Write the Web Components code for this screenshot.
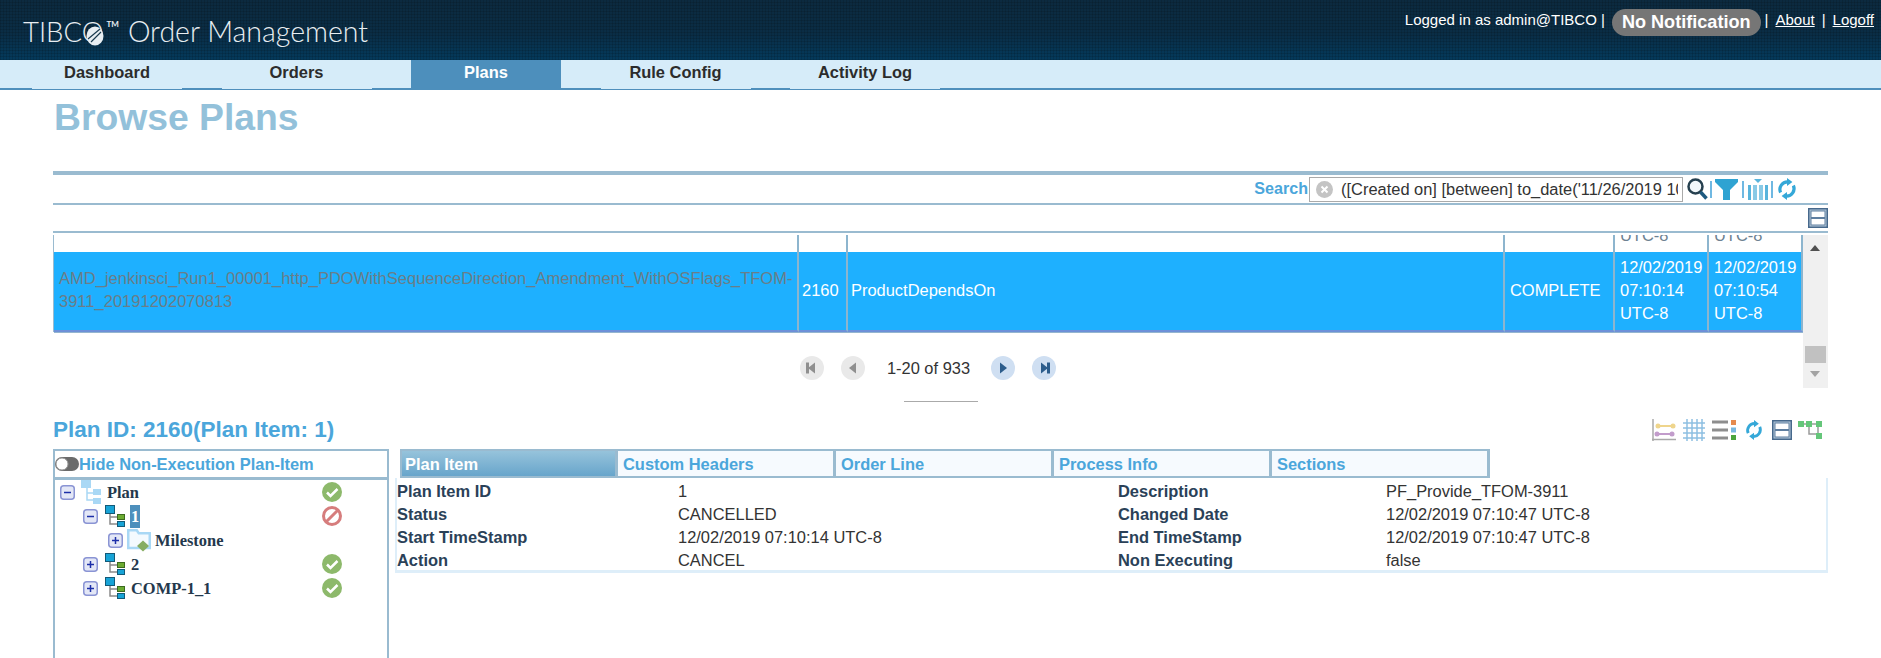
<!DOCTYPE html>
<html>
<head>
<meta charset="utf-8">
<title>Browse Plans</title>
<style>
  html, body { margin: 0; height: 100%; overflow: hidden; background: #fff; }
  body { font: 16.45px "Liberation Sans", Arial, sans-serif; color: #333; }
</style>
</head>
<body>
<oms-header></oms-header>
<oms-nav></oms-nav>
<oms-browse></oms-browse>

<script>
const RULE = '#9abbd0';
const LINK = '#4ba6db';

// shared icons, all hand drawn against the reference
const icons = {
  refresh: (w, h) => `<svg width="${w}" height="${h}" viewBox="0 0 20 22" fill="none">
    <path d="M3.6 14.5A7.6 7.6 0 0 1 11 3.8" stroke="#35a8d8" stroke-width="3.2"/>
    <path d="M16.4 7.5A7.6 7.6 0 0 1 9 18.2" stroke="#35a8d8" stroke-width="3.2"/>
    <path d="M10 0v8l5.4-4zM10 14v8l-5.4-4z" fill="#35a8d8"/></svg>`,
  box: () => `<svg width="20" height="20" viewBox="0 0 20 20" style="display:block">
    <rect width="20" height="20" fill="#47698c"/>
    <rect x="1.500" y="1.500" width="17" height="17" fill="#b4c8d9"/>
    <rect x="2.500" y="2.500" width="15" height="15" fill="#5f7fa0"/>
    <rect x="3.500" y="3.500" width="13" height="5.500" fill="#fff"/>
    <rect x="3.500" y="11" width="13" height="5.500" fill="#fff"/></svg>`,
  plan: `<svg width="20" height="24" viewBox="0 0 20 24" fill="none">
    <path d="M6 8v12h6M6 13h6" stroke="#a9d8f5" stroke-width="1.5"/>
    <rect width="10" height="8" fill="#a9d8f5"/>
    <rect x="12" y="9" width="8" height="6" fill="#a9d8f5"/>
    <rect x="12" y="18" width="8" height="6" fill="#a9d8f5"/></svg>`,
  node: `<svg width="20" height="22" viewBox="0 0 20 22" fill="none">
    <path d="M5 8v11h7M5 12h7" stroke="#8a8a8a" stroke-width="1.5"/>
    <rect x=".5" y=".5" width="9" height="8" fill="#17a3d6" stroke="#135a78"/>
    <rect x="12.5" y="9.5" width="7" height="5" fill="#6cab32" stroke="#3c6b1f"/>
    <rect x="12.5" y="16.5" width="7" height="5" fill="#17a3d6" stroke="#135a78"/></svg>`,
  folder: `<svg width="24" height="23" viewBox="0 0 24 23" fill="none">
    <path d="M1.250 19V1.250h8.500l2 3h11V19z" fill="#f4fafe" stroke="#a9d8f5" stroke-width="2.500"/>
    <path d="M16 11.500l6 5.500-6 5.500-6-5.500z" fill="#86ad63"/></svg>`
};

class OmsHeader extends HTMLElement {
  constructor() {
    super();
    this.shadow = this.attachShadow({ mode: 'open' });
  }

  connectedCallback() {
    this.render();
  }

  render() {
    this.shadow.innerHTML = `
      <style>
        :host {
          display: flex;
          justify-content: space-between;
          height: 60px;
          color: #fff;
          background:
            repeating-linear-gradient(90deg, rgba(0,0,0,.12) 0 1px, transparent 1px 3px),
            repeating-linear-gradient(0deg, rgba(0,0,0,.12) 0 1px, transparent 1px 3px),
            linear-gradient(#0c2a3f, #0a2d45 55%, #043a5c);
        }
        .logo {
          display: flex;
          align-items: baseline;
          padding: 14px 0 0 23px;
          color: #e8eef2;
          font: 300 28.500px Lato, "Liberation Sans", sans-serif;
        }
        .tibco { position: relative; font-size: 27.500px; }
        .leaf { position: absolute; right: 0; top: 11px; }
        sup { font-size: 8px; margin: 0 9px 0 3px; align-self: flex-start; line-height: 20px; font-weight: 700; }
        .user {
          display: flex;
          align-items: flex-start;
          padding: 9px 7px 0 0;
          font-size: 15px;
          line-height: 22px;
        }
        .pill {
          margin: 0 4px 0 7px;
          padding: 0 10px;
          height: 27px;
          line-height: 27px;
          border-radius: 14px;
          background: #767676;
          font-size: 18.100px;
          font-weight: bold;
        }
        a { color: #fff; text-decoration: underline; margin: 0 7px; }
        a:last-child { margin-right: 0; }
      </style>
      <div class="logo">
        <span class="tibco">TIBCO<svg class="leaf" width="18" height="20" viewBox="0 0 18 20"><ellipse cx="9" cy="10" rx="8.500" ry="9.500" fill="#e8eef2"/><path d="M2 13 14 3M5 16 15 6" stroke="#1a3a4e" stroke-width="1.200"/></svg></span>
        <sup>TM</sup>
        <span>Order Management</span>
      </div>
      <div class="user">
        <span>Logged in as admin@TIBCO |</span>
        <span class="pill">No Notification</span>
        <span>|</span><a>About</a><span>|</span><a>Logoff</a>
      </div>
    `;
  }
}

class OmsNav extends HTMLElement {
  constructor() {
    super();
    this.shadow = this.attachShadow({ mode: 'open' });
  }

  connectedCallback() {
    this.render();
  }

  render() {
    const tabs = ['Dashboard', 'Orders', 'Plans', 'Rule Config', 'Activity Log'];
    this.shadow.innerHTML = `
      <style>
        :host {
          display: flex;
          gap: 39.500px;
          height: 30px;
          padding-left: 32px;
          background: linear-gradient(#d6ecf9 28px, #4f8fbc 28px);
        }
        div {
          width: 150px;
          height: 29px;
          line-height: 24px;
          text-align: center;
          font-weight: bold;
          color: #2c2c2c;
          background: #d6ecf9;
        }
        .on { height: 30px; color: #fff; background: #4d8fbc; }
      </style>
      ${ tabs.map(t => `<div class="${ t === 'Plans' ? 'on' : '' }">${ t }</div>`).join('') }
    `;
  }
}

class OmsSearch extends HTMLElement {
  constructor() {
    super();
    this.shadow = this.attachShadow({ mode: 'open' });
  }

  connectedCallback() {
    this.render();
  }

  render() {
    this.shadow.innerHTML = `
      <style>
        :host {
          display: flex;
          align-items: center;
          justify-content: flex-end;
          height: 28px;
          padding-right: 31px;
        }
        b { color: ${ LINK }; margin: -2px 1px 0 0; font-size: 16.100px; }
        .input {
          display: flex;
          align-items: center;
          box-sizing: border-box;
          width: 374px;
          height: 25px;
          margin: 1px 1px 0 0;
          border: 1px solid #aaa;
          overflow: hidden;
          white-space: nowrap;
        }
        .clear { flex: none; margin: 0 8px 0 6px; }
        .value { flex: 1; min-width: 0; overflow: hidden; margin-right: 4px; }
        .sep { width: 2px; height: 17px; background: ${ LINK }; opacity: .8; margin: 0 3px; }
        svg { flex: none; display: block; }
      </style>
      <b>Search</b>
      <div class="input">
        <svg class="clear" width="17" height="17" viewBox="0 0 17 17"><circle cx="8.500" cy="8.500" r="8.500" fill="#c4c4c4"/><path d="M5.500 5.500l6 6M11.500 5.500l-6 6" stroke="#fff" stroke-width="2"/></svg>
        <span class="value">([Created on] [between] to_date('11/26/2019 10:00:00','MM/DD/YYYY HH24:MI:SS')</span>
      </div>
      <svg style="margin-left:3px" width="21" height="22" viewBox="0 0 21 22" fill="none">
        <circle cx="8.500" cy="8.500" r="7" stroke="#26404f" stroke-width="2.500" fill="#f3f8fb"/>
        <path d="M13.500 14l6 6.500" stroke="#1d5a80" stroke-width="3.500"/></svg>
      <span class="sep" style="margin-left:2px"></span>
      <svg width="23" height="21" viewBox="0 0 23 21"><path d="M0 0h23v3l-8 8v10h-7V11L0 3z" fill="#2fa3d2"/></svg>
      <span class="sep" style="margin-left:4px;margin-right:4px"></span>
      <svg width="20" height="21" viewBox="0 0 20 21" fill="#58b4dc"><path d="M6 0h8l-4 4z"/><rect y="6" width="3" height="15"/><rect x="5" y="6" width="4" height="15" opacity=".7"/><rect x="11" y="6" width="4" height="15" opacity=".7"/><rect x="17" y="6" width="3" height="15"/></svg>
      <span class="sep" style="margin-left:3px;margin-right:4px"></span>
      ${ icons.refresh(20, 22) }
    `;
  }
}

class PlanTable extends HTMLElement {
  constructor() {
    super();
    this.shadow = this.attachShadow({ mode: 'open' });
  }

  connectedCallback() {
    this.render();
  }

  render() {
    this.shadow.innerHTML = `
      <style>
        :host {
          display: grid;
          grid-template-columns: 1fr 25px;
          height: 153px;
          margin-top: 2px;
        }
        .rows {
          display: grid;
          grid-template-columns: 745px 49px 657px 110px 94px 94px;
          grid-template-rows: 17px 80px;
          margin-left: 1px;
          box-shadow: -1px 0 0 ${ RULE };
          height: 97px;
        }
        .cell {
          box-sizing: border-box;
          border-right: 2px solid #8db5ce;
          padding-left: 5px;
          overflow: hidden;
        }
        .prev {
          display: flex;
          align-items: flex-end;
          padding-bottom: 5px;
          line-height: 23px;
          color: #6d8191;
        }
        .sel {
          display: flex;
          align-items: center;
          background: #1eb0ff;
          color: #fff;
          line-height: 23px;
          padding-bottom: 2px;
          border-bottom: 2px solid #6e90d8;
          box-shadow: 0 1px 0 #94b5d0;
        }
        .name { color: #6a7d88; font-size: 16.530px; }
        .tight { padding-left: 3px; }
        .bar {
          position: relative;
          background: #f0f0f0;
        }
        .thumb { position: absolute; left: 2px; right: 2px; top: 111px; height: 17px; background: #c1c1c1; }
        .up, .down {
          position: absolute;
          left: 7px;
          border: 5.500px solid transparent;
          border-top: 0;
          border-bottom: 6px solid #505050;
          top: 10px;
        }
        .down {
          top: 136px;
          border-bottom: 0;
          border-top: 6px solid #a3a3a3;
        }
      </style>
      <div>
        <div class="rows">
          <div class="cell prev"></div>
          <div class="cell prev"></div>
          <div class="cell prev"></div>
          <div class="cell prev"></div>
          <div class="cell prev">UTC-8</div>
          <div class="cell prev">UTC-8</div>
          <div class="cell sel name"><span>AMD_jenkinsci_Run1_00001_http_PDOWithSequenceDirection_Amendment_WithOSFlags_TFOM-3911_20191202070813</span></div>
          <div class="cell sel tight">2160</div>
          <div class="cell sel tight">ProductDependsOn</div>
          <div class="cell sel">COMPLETE</div>
          <div class="cell sel">12/02/2019 07:10:14 UTC-8</div>
          <div class="cell sel">12/02/2019 07:10:54 UTC-8</div>
        </div>
        <plan-pager></plan-pager>
      </div>
      <div class="bar"><i class="up"></i><i class="thumb"></i><i class="down"></i></div>
    `;
  }
}

class PlanPager extends HTMLElement {
  constructor() {
    super();
    this.shadow = this.attachShadow({ mode: 'open' });
  }

  connectedCallback() {
    this.render();
  }

  button(dir, bar, on) {
    const fill = on ? '#2c5d8c' : '#8f8f8f';
    const tri = dir === 'left' ? '15,6.500 15,17.500 8,12' : '9,6.500 9,17.500 16,12';
    const edge = !bar ? '' : dir === 'left'
      ? `<rect x="6" y="6.500" width="3" height="11" fill="${ fill }"/>`
      : `<rect x="15" y="6.500" width="3" height="11" fill="${ fill }"/>`;
    return `<svg width="24" height="24" viewBox="0 0 24 24"><circle cx="12" cy="12" r="12" fill="${ on ? '#cfdff2' : '#e9e9e9' }"/><polygon points="${ tri }" fill="${ fill }"/>${ edge }</svg>`;
  }

  render() {
    this.shadow.innerHTML = `
      <style>
        :host {
          display: flex;
          align-items: center;
          justify-content: center;
          height: 24px;
          margin-top: 24px;
          color: #333;
        }
        span { margin: 0 21px 0 22px; white-space: nowrap; }
        svg { display: block; flex: none; }
        svg + svg { margin-left: 17px; }
      </style>
      ${ this.button('left', true, false) }
      ${ this.button('left', false, false) }
      <span>1-20 of 933</span>
      ${ this.button('right', false, true) }
      ${ this.button('right', true, true) }
    `;
  }
}

class PlanToolbar extends HTMLElement {
  constructor() {
    super();
    this.shadow = this.attachShadow({ mode: 'open' });
  }

  connectedCallback() {
    this.render();
  }

  render() {
    this.shadow.innerHTML = `
      <style>
        :host {
          display: flex;
          justify-content: space-between;
          align-items: center;
          height: 26px;
          margin-top: 15px;
          padding: 0 6px 0 0;
        }
        h2 { margin: 0; font-size: 22.500px; color: ${ LINK }; line-height: 26px; }
        .tools { display: flex; align-items: center; }
        svg { display: block; flex: none; }
      </style>
      <h2>Plan ID: 2160(Plan Item: 1)</h2>
      <div class="tools">
        <svg width="24" height="22" viewBox="0 0 24 22" fill="none" style="margin-right:7px">
          <path d="M1 0v22M0 20.500h24" stroke="#aaa" stroke-width="1.500"/>
          <path d="M6 7h15" stroke="#efd58c" stroke-width="2"/><circle cx="6" cy="7" r="2.500" fill="#efd58c"/><circle cx="21" cy="7" r="2.500" fill="#efd58c"/>
          <path d="M5 15h15" stroke="#c29ccb" stroke-width="2"/><circle cx="5" cy="15" r="2.500" fill="#c29ccb"/><circle cx="20" cy="15" r="2.500" fill="#c29ccb"/>
        </svg>
        <svg width="22" height="22" viewBox="0 0 22 22" stroke="#8ec0e2" stroke-width="1.500" style="margin-right:7px">
          <path d="M4 0v22M9 0v22M14 0v22M19 0v22M0 4h22M0 9h22M0 14h22M0 19h22"/>
        </svg>
        <svg width="24" height="20" viewBox="0 0 24 20" style="margin-right:9px">
          <path d="M0 2h16M0 10h16M0 18h16" stroke="#8e8e8e" stroke-width="3"/>
          <rect x="19" width="5" height="5" fill="#e58a4e"/><rect x="19" y="7.500" width="5" height="5" fill="#79b7de"/><rect x="19" y="15" width="5" height="5" fill="#4ba43c"/>
        </svg>
        <span style="margin-right:9px">${ icons.refresh(18, 22) }</span>
        <span style="margin-right:6px">${ icons.box() }</span>
        <svg width="24" height="20" viewBox="0 0 24 20" fill="#65c67a">
          <path d="M5 4h16M11 4v10h8M20 4v12" stroke="#9a9a9a" stroke-width="1.500" fill="none"/>
          <rect y="1" width="6" height="6"/><rect x="8" y="1" width="6" height="6"/><rect x="18" y="1" width="6" height="6"/><rect x="18" y="13" width="6" height="6"/>
        </svg>
      </div>
    `;
  }
}

class TreeRow extends HTMLElement {
  static get observedAttributes() {
    return ['label'];
  }

  constructor() {
    super();
    this.shadow = this.attachShadow({ mode: 'open' });
  }

  get label() {
    return this.getAttribute('label');
  }

  connectedCallback() {
    this.render();
  }

  attributeChangedCallback() {
    if (this.isConnected) this.render();
  }

  status() {
    const state = this.getAttribute('status');
    if (state === 'ok') {
      return `<svg class="st" width="20" height="20" viewBox="0 0 20 20" fill="none"><circle cx="10" cy="10" r="10" fill="#8db96b"/><path d="M5 10.500l3.500 3.500L15.500 7" stroke="#fff" stroke-width="2.500"/></svg>`;
    }
    if (state === 'cancel') {
      return `<svg class="st" width="20" height="20" viewBox="0 0 20 20" fill="none"><circle cx="10" cy="10" r="8.500" fill="#fff" stroke="#d67d7d" stroke-width="3"/><path d="M4.500 15.500l11-11" stroke="#d67d7d" stroke-width="3"/></svg>`;
    }
    return '';
  }

  render() {
    const open = this.getAttribute('open') !== null;
    const plus = open ? '' : '<path d="M7.500 4v7" stroke="#1c2fa8" stroke-width="1.500"/>';
    const selected = this.getAttribute('selected') !== null;
    this.shadow.innerHTML = `
      <style>
        :host {
          display: flex;
          align-items: center;
          height: 24px;
          padding-left: var(--indent, 5px);
          padding-right: 45px;
          font: bold 16.450px "Liberation Serif", "Times New Roman", serif;
          color: #24384c;
        }
        svg { display: block; flex: none; }
        .icon { flex: none; margin: 0 var(--after, 5px) 0 var(--before, 5px); display: block; }
        .label { padding: 0 1px; line-height: 23px; }
        .label.on { background: #4d8fbc; color: #fff; }
        .st { margin-left: auto; }
      </style>
      <svg width="15" height="15" viewBox="0 0 15 15" fill="none">
        <rect x=".75" y=".75" width="13.500" height="13.500" rx="3" fill="#e3e7f6" stroke="#8a94d4" stroke-width="1.500"/>
        <path d="M4 7.500h7" stroke="#1c2fa8" stroke-width="1.500"/>${ plus }
      </svg>
      <span class="icon">${ icons[this.getAttribute('icon')] }</span>
      <span class="label ${ selected ? 'on' : '' }">${ this.label }</span>
      ${ this.status() }
    `;
  }
}

class PlanTree extends HTMLElement {
  constructor() {
    super();
    this.shadow = this.attachShadow({ mode: 'open' });
  }

  connectedCallback() {
    this.render();
  }

  render() {
    this.shadow.innerHTML = `
      <style>
        :host {
          display: block;
          box-sizing: border-box;
          flex: none;
          width: 336px;
          border: solid ${ RULE };
          border-width: 2px 2px 0;
        }
        .toggle {
          display: flex;
          align-items: center;
          height: 26px;
          padding-left: 0;
          border-bottom: 3px solid ${ RULE };
          font-weight: bold;
          color: ${ LINK };
          white-space: nowrap;
        }
        svg { display: block; flex: none; }
        .rows { height: 200px; }
      </style>
      <div class="toggle">
        <svg width="24" height="14" viewBox="0 0 24 14"><rect width="24" height="14" rx="7" fill="#6b6b6b"/><circle cx="7" cy="7" r="6" fill="#fff" stroke="#999"/></svg>
        <span>Hide Non-Execution Plan-Item</span>
      </div>
      <div class="rows">
        <tree-row label="Plan" icon="plan" status="ok" open style="--indent:5px;--before:6px"></tree-row>
        <tree-row label="1" icon="node" status="cancel" open selected style="--indent:28px;--before:7px"></tree-row>
        <tree-row label="Milestone" icon="folder" style="--indent:53px;--before:4px;--after:3px"></tree-row>
        <tree-row label="2" icon="node" status="ok" style="--indent:28px;--before:7px"></tree-row>
        <tree-row label="COMP-1_1" icon="node" status="ok" style="--indent:28px;--before:7px"></tree-row>
      </div>
    `;
  }
}

class PlanTabs extends HTMLElement {
  constructor() {
    super();
    this.shadow = this.attachShadow({ mode: 'open' });
  }

  connectedCallback() {
    this.render();
  }

  render() {
    const tabs = ['Plan Item', 'Custom Headers', 'Order Line', 'Process Info', 'Sections'];
    this.shadow.innerHTML = `
      <style>
        :host { display: flex; padding-left: 5px; }
        div {
          box-sizing: border-box;
          width: 218px;
          height: 29px;
          padding-left: 5px;
          line-height: 26px;
          font-weight: bold;
          white-space: nowrap;
          color: ${ LINK };
          background: #f6fafe;
          border: solid ${ RULE };
          border-width: 2px 3px 2px 0;
        }
        div:first-of-type {
          padding-left: 3px;
          border-left-width: 2px;
          color: #fff;
          background: linear-gradient(#96c3db, #68a5cb);
        }
      </style>
      ${ tabs.map(t => `<div>${ t }</div>`).join('') }
    `;
  }
}

class PlanDetails extends HTMLElement {
  constructor() {
    super();
    this.shadow = this.attachShadow({ mode: 'open' });
  }

  connectedCallback() {
    this.render();
  }

  render() {
    const rows = [
      ['Plan Item ID', '1', 'Description', 'PF_Provide_TFOM-3911'],
      ['Status', 'CANCELLED', 'Changed Date', '12/02/2019 07:10:47 UTC-8'],
      ['Start TimeStamp', '12/02/2019 07:10:14 UTC-8', 'End TimeStamp', '12/02/2019 07:10:47 UTC-8'],
      ['Action', 'CANCEL', 'Non Executing', 'false']
    ];
    this.shadow.innerHTML = `
      <style>
        :host {
          display: grid;
          grid-template-columns: 281px 440px 268px 1fr;
          grid-auto-rows: 23px;
          align-items: center;
          height: 90px;
          padding-top: 2px;
          border: solid #deeef9;
          border-width: 0 2px 3px 2px;
          color: #333;
        }
        b { color: #2a4158; white-space: nowrap; }
        span { white-space: nowrap; }
      </style>
      ${ rows.map(r => `<b>${ r[0] }</b><span>${ r[1] }</span><b>${ r[2] }</b><span>${ r[3] }</span>`).join('') }
    `;
  }
}

class OmsBrowse extends HTMLElement {
  constructor() {
    super();
    this.shadow = this.attachShadow({ mode: 'open' });
  }

  connectedCallback() {
    this.render();
  }

  render() {
    this.shadow.innerHTML = `
      <style>
        :host {
          display: block;
          padding: 0 53px;
        }
        h1 {
          margin: 0;
          height: 81px;
          padding: 2px 0 0 1px;
          box-sizing: border-box;
          font-size: 37.300px;
          line-height: 50px;
          color: #93c1da;
        }
        .rule { background: ${ RULE }; height: 2px; }
        .thick { height: 4px; }
        .boxrow { display: flex; justify-content: flex-end; align-items: center; height: 26px; }
        .grip { width: 74px; height: 1px; margin: 13px 0 0 851px; background: #aaa; }
        .panes { display: flex; margin-top: 6px; }
        .right { flex: 1; margin-left: 6px; }
      </style>
      <h1>Browse Plans</h1>
      <div class="rule thick"></div>
      <oms-search></oms-search>
      <div class="rule"></div>
      <div class="boxrow">${ icons.box() }</div>
      <div class="rule"></div>
      <plan-table></plan-table>
      <div class="grip"></div>
      <plan-toolbar></plan-toolbar>
      <div class="panes">
        <plan-tree></plan-tree>
        <div class="right">
          <plan-tabs></plan-tabs>
          <plan-details></plan-details>
        </div>
      </div>
    `;
  }
}

customElements.define('oms-header', OmsHeader);
customElements.define('oms-nav', OmsNav);
customElements.define('oms-search', OmsSearch);
customElements.define('plan-pager', PlanPager);
customElements.define('plan-table', PlanTable);
customElements.define('plan-toolbar', PlanToolbar);
customElements.define('tree-row', TreeRow);
customElements.define('plan-tree', PlanTree);
customElements.define('plan-tabs', PlanTabs);
customElements.define('plan-details', PlanDetails);
customElements.define('oms-browse', OmsBrowse);
</script>
</body>
</html>
